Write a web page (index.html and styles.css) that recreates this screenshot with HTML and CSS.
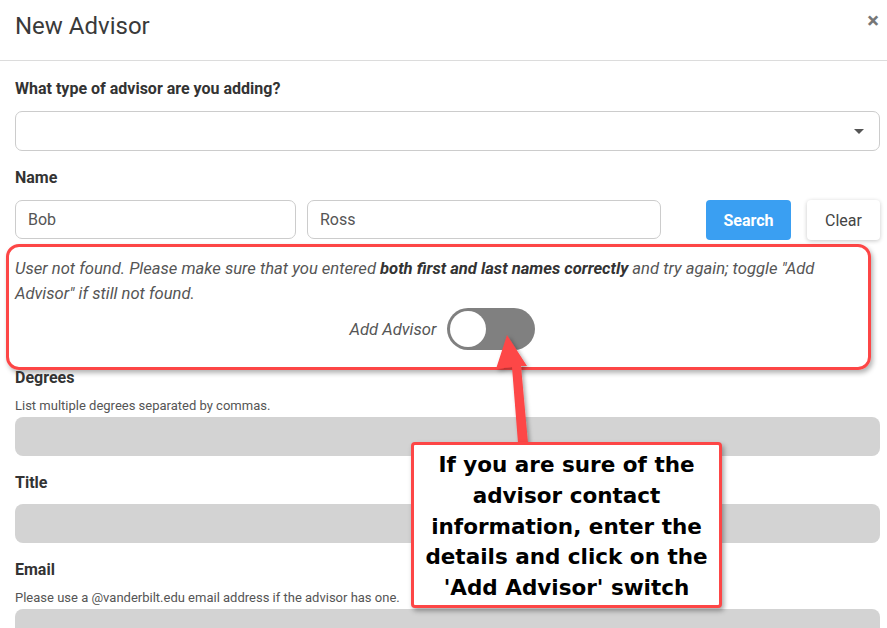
FILE: index.html
```html
<!DOCTYPE html>
<html lang="en">
<head>
    <meta charset="UTF-8">
    <title>New Advisor</title>
    <link rel="stylesheet" href="styles.css">
</head>
<body>
    <div class="modal">
        <div class="modal-header">
            <h2>New Advisor</h2>
            <span class="close">&times;</span>
        </div>
        <div class="modal-body">
            <label class="label">What type of advisor are you adding?</label>
            <div class="select">
                <span class="caret"></span>
            </div>

            <label class="label">Name</label>
            <div class="name-row">
                <div class="input first">Bob</div>
                <div class="input last">Ross</div>
                <button class="btn btn-search">Search</button>
                <button class="btn btn-clear">Clear</button>
            </div>

            <div class="notice">
                <p>User not found. Please make sure that you entered <b>both first and last names correctly</b> and try again; toggle "Add Advisor" if still not found.</p>
                <div class="toggle-row">
                    <span>Add Advisor</span>
                    <div class="switch"><div class="knob"></div></div>
                </div>
            </div>

            <label class="label">Degrees</label>
            <div class="help">List multiple degrees separated by commas.</div>
            <div class="input disabled"></div>

            <label class="label">Title</label>
            <div class="input disabled"></div>

            <label class="label">Email</label>
            <div class="help">Please use a @vanderbilt.edu email address if the advisor has one.</div>
            <div class="input disabled"></div>
        </div>
    </div>

    <!-- annotation overlay -->
    <svg class="arrow" width="887" height="628" viewBox="0 0 887 628">
        <defs>
            <filter id="sh" x="-50%" y="-50%" width="200%" height="200%">
                <feDropShadow dx="2" dy="2" stdDeviation="2" flood-color="#000" flood-opacity="0.35"/>
            </filter>
        </defs>
        <polygon points="507,335 527,366 521,366 528,443 518,443 512,367 496,369" fill="#fd4646" filter="url(#sh)"/>
    </svg>
    <div class="callout">If you are sure of the advisor contact information, enter the details and click on the 'Add Advisor' switch</div>
</body>
</html>
```

FILE: styles.css
```css
body {
    margin: 0;
    font-family: 'Roboto', 'Liberation Sans', sans-serif;
    color: #333;
    background: #fff;
    overflow: hidden;
}
.modal {
    width: 887px;
}
.modal-header {
    height: 61px;
    border-bottom: 1px solid #dcdcdc;
    display: flex;
    align-items: flex-start;
    justify-content: space-between;
    padding: 0 8px 0 15px;
    box-sizing: border-box;
}
.modal-header h2 {
    margin: 12px 0 0;
    font-size: 24px;
    font-weight: 400;
    color: #3a3a3a;
}
.close {
    font-size: 22px;
    font-weight: 700;
    color: #777;
    margin-top: 8px;
}
.modal-body {
    padding: 17px 7px 0 15px;
}
.label {
    display: block;
    font-size: 16px;
    font-weight: 700;
    line-height: 22px;
    color: #333;
}
.select {
    height: 40px;
    border: 1px solid #ccc;
    border-radius: 7px;
    box-sizing: border-box;
    margin: 11px 0 16px;
    display: flex;
    align-items: center;
    justify-content: flex-end;
    padding-right: 15px;
}
.caret {
    width: 0;
    height: 0;
    border-left: 5px solid transparent;
    border-right: 5px solid transparent;
    border-top: 5px solid #555;
}
.name-row {
    display: flex;
    margin-top: 11px;
    align-items: flex-start;
}
.input {
    height: 39px;
    border: 1px solid #ccc;
    border-radius: 7px;
    box-sizing: border-box;
    font-size: 16px;
    color: #555;
    padding: 0 12px;
    display: flex;
    align-items: center;
}
.input.first {
    width: 281px;
}
.input.last {
    width: 354px;
    margin-left: 11px;
}
.btn {
    height: 40px;
    border: none;
    border-radius: 4px;
    font-family: inherit;
    font-size: 16px;
    padding: 0;
}
.btn-search {
    width: 85px;
    margin-left: 45px;
    background: #3a9ff2;
    color: #fff;
    font-weight: 700;
}
.btn-clear {
    width: 73px;
    margin-left: 16px;
    background: #fff;
    color: #444;
    font-weight: 400;
    box-shadow: 0 1px 4px rgba(0, 0, 0, 0.22);
}
.notice {
    margin: 4px 9px -3px -9px;
    border: 3px solid #fd4646;
    border-radius: 13px;
    box-shadow: 2px 3px 5px rgba(0, 0, 0, 0.3);
    padding: 9px 6px 17px 6px;
    font-style: italic;
    color: #555;
    font-size: 16.6px;
}
.notice p {
    margin: 0;
    line-height: 25px;
}
.notice b {
    color: #333;
}
.toggle-row {
    display: flex;
    justify-content: center;
    align-items: center;
    gap: 11px;
    margin-top: 2px;
    padding-left: 8px;
}
.switch {
    width: 88px;
    height: 42px;
    border-radius: 21px;
    background: #808080;
    padding: 3px;
    box-sizing: border-box;
}
.knob {
    width: 36px;
    height: 36px;
    border-radius: 50%;
    background: #fff;
}
.help {
    font-size: 13px;
    color: #555;
    line-height: 18px;
    margin-top: 8px;
}
.input.disabled {
    background: #d3d3d3;
    border: none;
    border-radius: 8px;
    margin: 2px 0 16px;
}
.modal-body .label + .input.disabled {
    margin-top: 10px;
}
.arrow {
    position: absolute;
    top: 0;
    left: 0;
    pointer-events: none;
}
.callout {
    position: absolute;
    left: 411px;
    top: 442px;
    width: 311px;
    height: 166px;
    box-sizing: border-box;
    border: 3px solid #fd4646;
    border-radius: 4px;
    background: #fff;
    box-shadow: 2px 3px 5px rgba(0, 0, 0, 0.35);
    font-family: 'DejaVu Sans', 'Liberation Sans', sans-serif;
    font-weight: 700;
    font-size: 21.5px;
    line-height: 30.8px;
    color: #000;
    text-align: center;
    padding: 5px 2px 0;
}
```
